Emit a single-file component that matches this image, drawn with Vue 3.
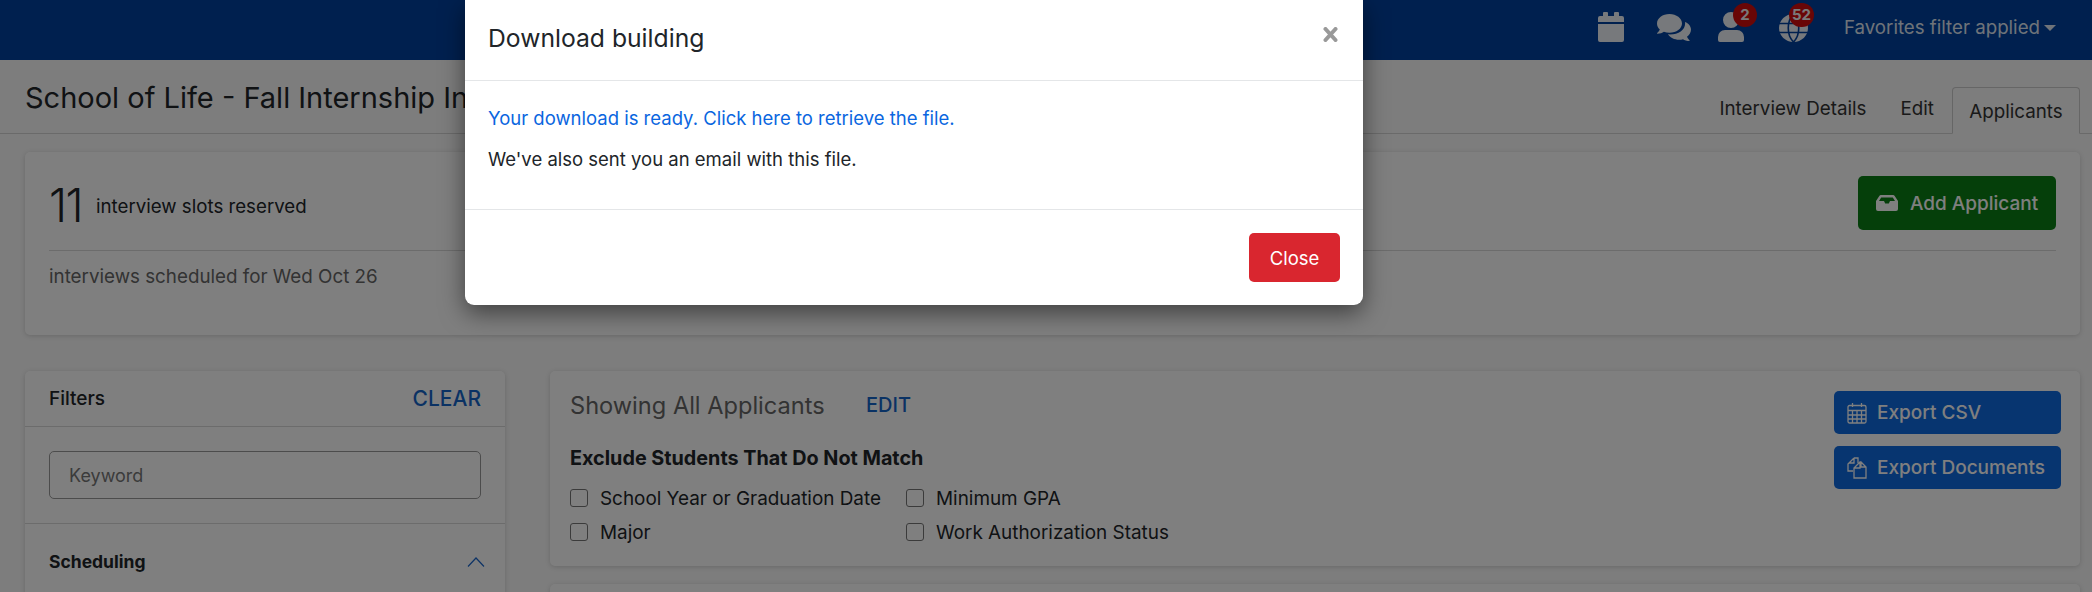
<script setup>
const tabs = ['Interview Details', 'Edit']
const checks = ['School Year or Graduation Date', 'Minimum GPA', 'Major', 'Work Authorization Status']
</script>

<template>
  <div class="page">
    <header class="nav">
      <svg class="ic cal" viewBox="0 0 26 30"><path d="M6 0h3a1 1 0 0 1 1 1v3h6V1a1 1 0 0 1 1-1h3a1 1 0 0 1 1 1v3h3a2 2 0 0 1 2 2v4H0V6a2 2 0 0 1 2-2h3V1a1 1 0 0 1 1-1zM0 12h26v16a2 2 0 0 1-2 2H2a2 2 0 0 1-2-2z"/></svg>
      <svg class="ic chat" viewBox="0 0 34 27"><path d="M12.500 0C5.600 0 0 4.200 0 9.400c0 2.300 1 4.300 2.800 6C2 17 .8 18.500.1 19.100c-.2.200-.1.600.3.600 2.700 0 5-1 6.500-2 1.700.6 3.600 1 5.600 1 6.900 0 12.500-4.200 12.500-9.300S19.400 0 12.500 0z"/><path d="M34 15.500c0-3.400-2.500-6.300-6-7.600.1.500.1 1 .1 1.500 0 6.400-6.500 11-15.100 11-.700 0-1.400 0-2-.1 2.100 3.300 6.300 5.500 11.100 5.500 1.400 0 2.700-.2 3.900-.6 1.500 1 3.700 1.800 6.300 1.800.4 0 .5-.4.300-.6-.6-.6-1.800-2-2.600-3.600C32.500 21.100 34 18.400 34 15.500z" /></svg>
      <div class="badged user">
        <svg class="ic" viewBox="0 0 26 30"><path d="M13 0a8 8 0 1 1 0 16 8 8 0 0 1 0-16zM7 18h12a7 7 0 0 1 7 7v3a2 2 0 0 1-2 2H2a2 2 0 0 1-2-2v-3a7 7 0 0 1 7-7z"/></svg>
        <span class="badge">2</span>
      </div>
      <div class="badged globe">
        <svg class="ic" viewBox="0 0 29 28"><path d="M14.500 0C6.500 0 0 6.300 0 14s6.500 14 14.500 14S29 21.700 29 14 22.500 0 14.500 0z"/><path d="M0 9.500h29M0 18.500h29M14.500 0c-7 7-7 21 0 28M14.500 0c7 7 7 21 0 28" fill="none" stroke="#00409e" stroke-width="1.600"/></svg>
        <span class="badge">52</span>
      </div>
      <span class="fav">Favorites filter applied<i class="caret"></i></span>
    </header>

    <div class="head">
      <h1>School of Life - Fall Internship Interviews</h1>
      <nav class="tabs">
        <a v-for="t in tabs" :key="t">{{ t }}</a>
        <a class="active">Applicants</a>
      </nav>
    </div>

    <section class="card summary">
      <div class="sum-top">
        <div class="count"><b>11</b><span>interview slots reserved</span></div>
        <button class="btn green">
          <svg class="inbox" viewBox="0 0 22 16"><path d="M5 0h12a2 2 0 0 1 1.700.9L22 6v8a2 2 0 0 1-2 2H2a2 2 0 0 1-2-2V6L3.300.9A2 2 0 0 1 5 0zm.2 2.500L3 6h5l1.200 2.500h3.600L14 6h5l-2.200-3.500z"/></svg>
          Add Applicant
        </button>
      </div>
      <p class="sched">interviews scheduled for Wed Oct 26</p>
    </section>

    <div class="cols">
      <aside class="card filters">
        <div class="f-head"><span>Filters</span><a>CLEAR</a></div>
        <div class="f-key"><input placeholder="Keyword" /></div>
        <div class="f-sec">
          <b>Scheduling</b>
          <svg class="chev" viewBox="0 0 18 10"><path d="M1 9.500 9 1l8 8.500" fill="none" stroke="#1a66cc" stroke-width="1.200"/></svg>
        </div>
      </aside>
      <div class="main">
        <section class="card show">
          <div class="show-l">
            <div class="show-t"><h2>Showing All Applicants</h2><a>EDIT</a></div>
            <h3>Exclude Students That Do Not Match</h3>
            <div class="checks">
              <label v-for="c in checks" :key="c"><i class="box"></i>{{ c }}</label>
            </div>
          </div>
          <div class="exports">
            <button class="btn blue">
              <svg class="bi" viewBox="0 0 20 22" fill="none" stroke="currentColor" stroke-width="1.300"><rect x="1" y="3.500" width="18" height="17.500" rx="1.500"/><path d="M1 8.500h18M1 13h18M1 17h18M5.500 8.500V21M10 8.500V21M14.500 8.500V21M5.500 1v4M14.500 1v4"/></svg>
              Export CSV
            </button>
            <button class="btn blue">
              <svg class="bi" viewBox="0 0 20 22" fill="none" stroke="currentColor" stroke-width="1.300"><path d="M7 1h4v5M7 1 1 7v7h5M7 1v5H2"/><path d="M13 5h1l5 5v11H7V11zM13 5v6H7M14 5v5h5"/></svg>
              Export Documents
            </button>
          </div>
        </section>
        <section class="card next"></section>
      </div>
    </div>

    <div class="overlay">
      <div class="modal">
        <div class="m-head">
          <h4>Download building</h4>
          <svg class="x" viewBox="0 0 15 15"><path d="M2.500 2 12.500 13M12.500 2 2.500 13" fill="none" stroke="#999" stroke-width="4" stroke-linecap="round"/></svg>
        </div>
        <div class="m-body">
          <a>Your download is ready. Click here to retrieve the file.</a>
          <p>We've also sent you an email with this file.</p>
        </div>
        <div class="m-foot"><button class="close">Close</button></div>
      </div>
    </div>
  </div>
</template>

<style>
html, body { margin: 0; overflow: hidden; }
</style>

<style scoped>
.page { position: relative; width: 2092px; height: 592px; overflow: hidden; background: #fafafa; font-family: Inter, "Liberation Sans", sans-serif; color: #212529; font-size: 18.800px; }
a { color: #1565c9; }
h1, h2, h3, h4, p { margin: 0; font-weight: 400; }

.nav { height: 60px; box-sizing: border-box; background: #00409e; display: flex; align-items: flex-start; padding-right: 36px; justify-content: flex-end; color: #fff; }
.ic { fill: #eef3f8; display: block; }
.cal { width: 26px; height: 30px; margin-top: 12px; }
.chat { width: 34px; height: 27px; margin: 14px 0 0 33px; }
.badged { position: relative; margin-top: 12px; }
.user { margin-left: 27px; width: 26px; }
.user .ic { width: 26px; height: 30px; }
.globe { margin-left: 35px; width: 29px; margin-top: 14px; }
.globe .ic { width: 29px; height: 28px; }
.badge { position: absolute; top: -9px; left: 15px; min-width: 24px; height: 24px; box-sizing: border-box; padding: 0 3px; border-radius: 12px; background: #d20c0c; color: #f4f4f4; font-size: 15px; font-weight: 700; line-height: 23px; text-align: center; }
.globe .badge { top: -11px; left: 10px; padding: 0 3px; }
.fav { margin-left: 36px; margin-top: 17px; font-size: 18.700px; line-height: 22px; color: #dfe7f2; display: flex; align-items: center; white-space: nowrap; }
.caret { width: 0; height: 0; margin-left: 4px; border: 6px solid transparent; border-top: 6px solid #dfe7f2; border-bottom: 0; }

.head { height: 74px; box-sizing: border-box; border-bottom: 1px solid #d4d4d4; padding: 0 12px 0 25px; display: flex; justify-content: space-between; }
h1 { font-size: 29px; line-height: 38px; padding-top: 19px; white-space: nowrap; }
.tabs { display: flex; align-items: flex-end; font-size: 18.800px; }
.tabs a { color: #333; padding: 0 17px; height: 46px; line-height: 46px; margin-bottom: 1px; }
.tabs a.active { box-sizing: border-box; height: 47px; margin-bottom: -1px; width: 128px; padding: 0; text-align: center; border: 1px solid #ccc; border-bottom-color: #fafafa; border-radius: 4px 4px 0 0; line-height: 47px; margin-left: 1px; }

.card { background: #fff; border-radius: 5px; box-shadow: 0 1px 5px rgba(0,0,0,.16); }
.summary { margin: 18px 12px 0 25px; height: 183px; box-sizing: border-box; padding: 24px 24px 0; }
.sum-top { display: flex; justify-content: space-between; align-items: flex-start; height: 74px; border-bottom: 1px solid #d8d8d8; }
.count { display: flex; align-items: center; height: 58px; }
.count b { font-size: 46px; font-weight: 300; letter-spacing: -1.500px; width: 47px; line-height: 58px; }
.count span { font-size: 18.700px; line-height: 24px; padding-top: 4px; }
.sched { margin-top: 14px; color: #666; font-size: 18.800px; line-height: 24px; }

.btn { border: 0; border-radius: 5px; color: #fff; font-family: inherit; display: flex; align-items: center; font-size: 19px; font-weight: 500; white-space: nowrap; }
.green { width: 198px; height: 54px; background: #0a7f15; justify-content: center; gap: 12px; }
.inbox { width: 22px; height: 16px; fill: currentColor; }

.cols { display: flex; align-items: flex-start; margin: 36px 12px 0 25px; gap: 45px; }
.filters { width: 480px; height: 300px; flex: none; }
.f-head { height: 56px; box-sizing: border-box; border-bottom: 1px solid #d8d8d8; padding: 0 24px; display: flex; justify-content: space-between; align-items: center; font-size: 19px; font-weight: 500; }
.f-head a { font-size: 21px; font-weight: 500; }
.f-key { height: 97px; box-sizing: border-box; padding: 24px; border-bottom: 1px solid #d8d8d8; }
input { width: 100%; height: 48px; box-sizing: border-box; border: 1px solid #999; border-radius: 5px; padding: 0 19px; font: 400 18px Inter, sans-serif; color: #333; background: transparent; outline: 0; display: block; }
input::placeholder { color: #777; }
.f-sec { display: flex; justify-content: space-between; align-items: center; padding: 25px 20px 0 24px; font-size: 17.500px; }
.f-sec b { font-weight: 700; line-height: 26px; }
.chev { width: 18px; height: 10px; }

.main { flex: 1; display: flex; flex-direction: column; gap: 18px; }
.show { height: 195px; box-sizing: border-box; padding: 20px 19px 0 20px; display: flex; justify-content: space-between; }
.show-t { display: flex; align-items: center; height: 28px; }
h2 { font-size: 23.600px; color: #666; width: 296px; white-space: nowrap; }
.show-t a { font-size: 20px; font-weight: 500; }
h3 { font-size: 19.800px; font-weight: 700; margin-top: 27px; line-height: 24px; white-space: nowrap; }
.checks { display: grid; grid-template-columns: 336px 1fr; margin-top: 16px; row-gap: 10px; }
.checks label { display: flex; align-items: center; gap: 12px; height: 24px; font-size: 18.900px; white-space: nowrap; }
.box { width: 18px; height: 18px; box-sizing: border-box; border: 1px solid #777; border-radius: 3px; flex: none; }
.exports { display: flex; flex-direction: column; gap: 12px; }
.blue { width: 227px; height: 43px; background: #0e6ae0; padding: 0 13px; gap: 10px; }
.bi { width: 20px; height: 22px; flex: none; }
.next { height: 200px; }

.overlay { position: absolute; inset: 0; background: rgba(0,0,0,.5); }
.modal { position: absolute; left: 465px; top: 0; width: 898px; height: 305px; box-sizing: border-box; background: #fff; border-radius: 0 0 9px 9px; box-shadow: 0 8px 24px rgba(0,0,0,.5); display: flex; flex-direction: column; }
.m-head { height: 81px; box-sizing: border-box; border-bottom: 1px solid #e4e6e8; padding: 0 23px; display: flex; justify-content: space-between; position: relative; }
h4 { font-size: 24.700px; line-height: 30px; padding-top: 23px; }
.x { position: absolute; right: 25px; top: 27px; width: 15px; height: 15px; }
.m-body { flex: 1; padding: 25px 23px 0; font-size: 18.500px; line-height: 24px; }
.m-body a { color: #0a66e0; display: block; }
.m-body p { margin-top: 17px; }
.m-foot { height: 96px; box-sizing: border-box; border-top: 1px solid #e4e6e8; padding: 23px; display: flex; justify-content: flex-end; }
.close { width: 91px; height: 49px; background: #d9262f; color: #fff; border: 0; border-radius: 5px; font: 400 18.500px Inter, sans-serif; }
</style>
